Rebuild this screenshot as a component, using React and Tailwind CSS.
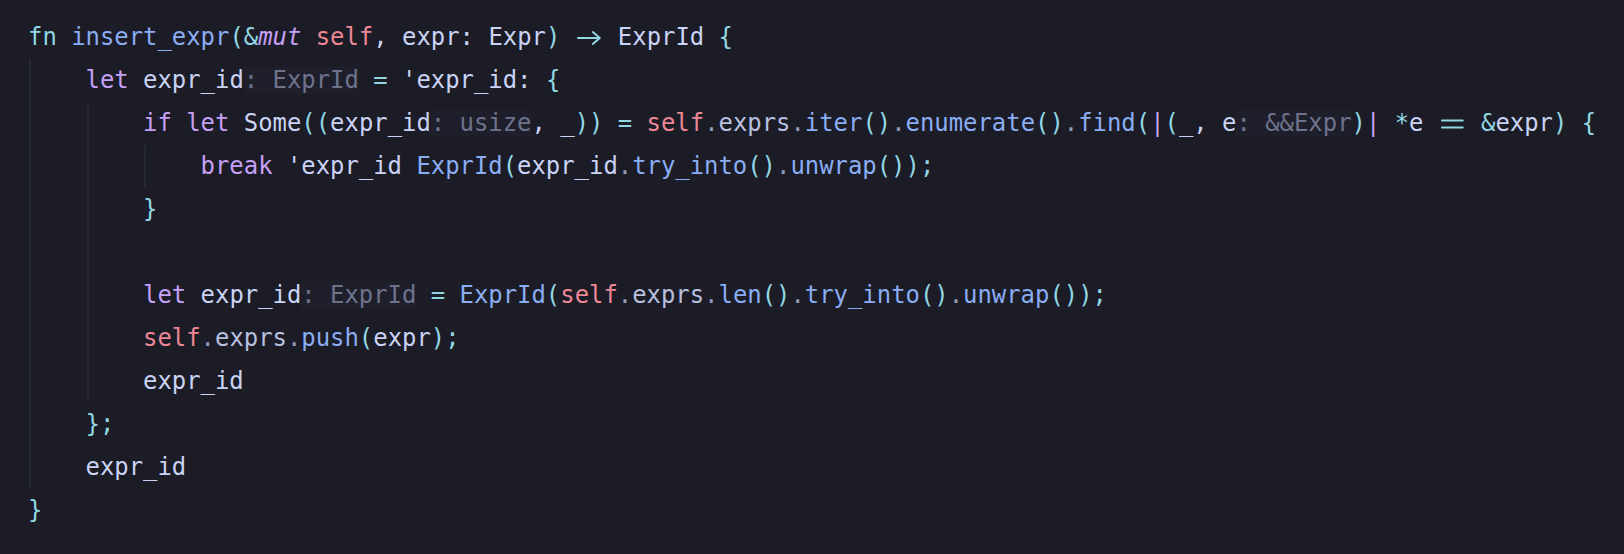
const C = {
  tx: 'text-[#cad3f5]',
  sky: 'text-[#91d7e3]',
  bl: 'text-[#8aadf4]',
  mv: 'text-[#c6a0f6]',
  mvi: 'text-[#c6a0f6] italic',
  rd: 'text-[#ed8796]',
  dot: 'text-[#939ab7]',
  fld: 'text-[#b8c0e0]',
  hint: 'text-[#6e738d] bg-[#1e1f2b]',
};

function Arrow() {
  return (
    <span className="inline-block w-[2ch] align-middle">
      <svg viewBox="0 0 29 24" className="h-[24px] w-full -mt-[3px]" fill="none" stroke="#91d7e3" strokeWidth="2" strokeLinecap="round" strokeLinejoin="round">
        <path d="M3 13h22M18 7l7 6-7 6" />
      </svg>
    </span>
  );
}

function Eq() {
  return (
    <span className="inline-block w-[2ch] align-middle">
      <svg viewBox="0 0 29 24" className="h-[24px] w-full -mt-[3px]" fill="none" stroke="#91d7e3" strokeWidth="2" strokeLinecap="round">
        <path d="M4 9.5h21M4 16.5h21" />
      </svg>
    </span>
  );
}

const lines = [
  [['fn', 'sky'], [' '], ['insert_expr', 'bl'], ['(', 'sky'], ['&', 'sky'], ['mut', 'mvi'], [' '], ['self', 'rd'], [', ', 'tx'], ['expr', 'tx'], [': ', 'tx'], ['Expr', 'tx'], [')', 'sky'], [' '], ['->', 'arrow'], [' '], ['ExprId', 'tx'], [' '], ['{', 'sky']],
  [['let', 'mv'], [' '], ['expr_id', 'tx'], [': ExprId', 'hint'], [' '], ['=', 'sky'], [' '], ["'expr_id", 'tx'], [':', 'tx'], [' '], ['{', 'sky']],
  [['if', 'mv'], [' '], ['let', 'mv'], [' '], ['Some', 'tx'], ['((', 'sky'], ['expr_id', 'tx'], [': usize', 'hint'], [', _', 'tx'], ['))', 'sky'], [' '], ['=', 'sky'], [' '], ['self', 'rd'], ['.', 'dot'], ['exprs', 'fld'], ['.', 'dot'], ['iter', 'bl'], ['()', 'sky'], ['.', 'dot'], ['enumerate', 'bl'], ['()', 'sky'], ['.', 'dot'], ['find', 'bl'], ['(', 'sky'], ['|', 'mv'], ['(', 'sky'], ['_, e', 'tx'], [': &&Expr', 'hint'], [')', 'sky'], ['|', 'mv'], [' '], ['*', 'sky'], ['e', 'tx'], [' '], ['==', 'eq'], [' '], ['&', 'sky'], ['expr', 'tx'], [')', 'sky'], [' '], ['{', 'sky']],
  [['break', 'mv'], [' '], ["'expr_id", 'tx'], [' '], ['ExprId', 'bl'], ['(', 'sky'], ['expr_id', 'tx'], ['.', 'dot'], ['try_into', 'bl'], ['()', 'sky'], ['.', 'dot'], ['unwrap', 'bl'], ['())', 'sky'], [';', 'sky']],
  [['}', 'sky']],
  [[' ']],
  [['let', 'mv'], [' '], ['expr_id', 'tx'], [': ExprId', 'hint'], [' '], ['=', 'sky'], [' '], ['ExprId', 'bl'], ['(', 'sky'], ['self', 'rd'], ['.', 'dot'], ['exprs', 'fld'], ['.', 'dot'], ['len', 'bl'], ['()', 'sky'], ['.', 'dot'], ['try_into', 'bl'], ['()', 'sky'], ['.', 'dot'], ['unwrap', 'bl'], ['())', 'sky'], [';', 'sky']],
  [['self', 'rd'], ['.', 'dot'], ['exprs', 'fld'], ['.', 'dot'], ['push', 'bl'], ['(', 'sky'], ['expr', 'tx'], [')', 'sky'], [';', 'sky']],
  [['expr_id', 'tx']],
  [['}', 'sky'], [';', 'sky']],
  [['expr_id', 'tx']],
  [['}', 'sky']],
];

function Line({ n }) {
  return (
    <div className="h-[43px] leading-[43px] whitespace-pre">
      {lines[n].map(([text, kind], i) => {
        if (kind === 'arrow') return <Arrow key={i} />;
        if (kind === 'eq') return <Eq key={i} />;
        return <span key={i} className={kind ? C[kind] : ''}>{text}</span>;
      })}
    </div>
  );
}

// indent guide: thin line at the start of the indent column
function Guide({ children }) {
  return <div className="ml-[1px] border-l-2 border-[#262735] pl-[calc(4ch-3px)]">{children}</div>;
}

export default function App() {
  return (
    <div className="min-h-screen w-full bg-[#1b1c26] pl-[28px] pt-4 font-['DejaVu_Sans_Mono',monospace] text-[23.9px] text-[#cad3f5]">
      <Line n={0} />
      <Guide>
        <Line n={1} />
        <Guide>
          <Line n={2} />
          <Guide>
            <Line n={3} />
          </Guide>
          <Line n={4} />
          <Line n={5} />
          <Line n={6} />
          <Line n={7} />
          <Line n={8} />
        </Guide>
        <Line n={9} />
        <Line n={10} />
      </Guide>
      <Line n={11} />
    </div>
  );
}
